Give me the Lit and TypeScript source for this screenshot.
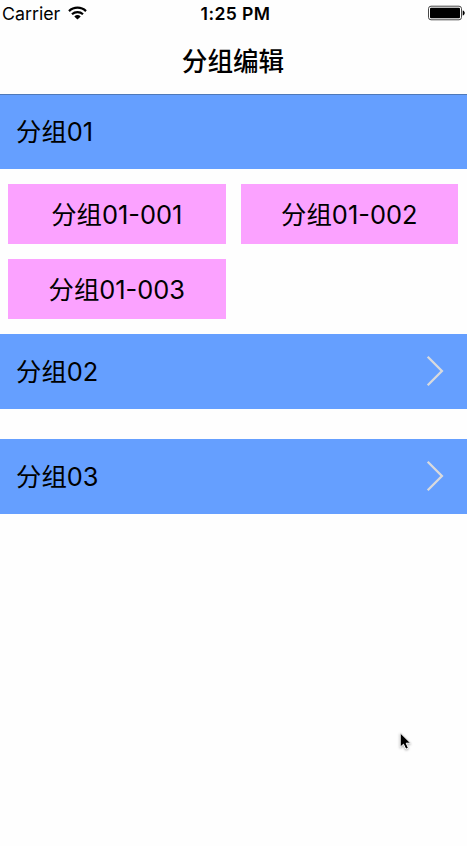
import { LitElement, html, css, svg, nothing } from "lit";
import { customElement, property } from "lit/decorators.js";

interface Group {
  title: string;
  items: string[];
}

const groups: Group[] = [
  { title: "分组01", items: ["分组01-001", "分组01-002", "分组01-003"] },
  { title: "分组02", items: [] },
  { title: "分组03", items: [] },
];

@customElement("status-bar")
export class StatusBar extends LitElement {
  static styles = css`
    :host {
      display: grid;
      grid-template-columns: 1fr auto 1fr;
      align-items: center;
      height: 27px;
      padding: 0 2px;
      box-sizing: border-box;
      font-size: 17.8px;
      line-height: 27px;
    }
    .carrier {
      display: flex;
      align-items: center;
      gap: 8px;
    }
    .time {
      font-weight: 600;
      font-size: 17.6px;
      letter-spacing: 0.4px;
      padding-left: 4px;
    }
    .battery {
      justify-self: end;
      margin-top: -1px;
    }
    svg {
      display: block;
    }
    .wifi {
      margin-top: -1px;
    }
  `;

  render() {
    return html`
      <div class="carrier">
        <span>Carrier</span>
        <svg class="wifi" width="19" height="14" viewBox="0 0 19 14">
          <g fill="none" stroke="#000" stroke-width="2.2">
            <path d="M1 5.1a12.2 12.2 0 0 1 17 0" />
            <path d="M4 8.3a8 8 0 0 1 11 0" />
          </g>
          <path d="M9.5 13.6 6.3 10.4a4.7 4.7 0 0 1 6.4 0z" />
        </svg>
      </div>
      <span class="time">1:25 PM</span>
      <svg class="battery" width="37" height="16" viewBox="0 0 37 16">
        <rect x="0.5" y="1.2" width="33" height="13.6" rx="2.5" fill="#fff" stroke="#333" stroke-width="0.9" />
        <rect x="2" y="2.7" width="30" height="10.6" rx="1" />
        <path d="M34.7 5.4c2.7.6 2.7 4.6 0 5.2z" />
      </svg>
    `;
  }
}

@customElement("group-section")
export class GroupSection extends LitElement {
  @property({ attribute: false }) group!: Group;

  static styles = css`
    :host {
      display: block;
    }
    .header {
      display: flex;
      align-items: center;
      justify-content: space-between;
      height: 75px;
      padding: 0 23px 0 16px;
      box-sizing: border-box;
      background: #659fff;
    }
    .items {
      display: grid;
      grid-template-columns: 1fr 1fr;
      grid-auto-rows: 60px;
      gap: 15px;
      padding: 15px 9px 15px 8px;
    }
    .item {
      display: flex;
      align-items: center;
      justify-content: center;
      padding-top: 1px;
      box-sizing: border-box;
      background: #fba2ff;
    }
    .chevron {
      display: block;
      margin-top: -1px;
    }
  `;

  render() {
    const { title, items } = this.group;
    const open = items.length > 0;
    return html`
      <div class="header">
        <span>${title}</span>
        ${open
          ? nothing
          : html`<svg class="chevron" width="18" height="32" viewBox="0 0 18 32">
              <path d="M1.7 1.8 15.9 16 1.7 30.2" fill="none" stroke="#d9dadd" stroke-width="2.3" />
            </svg>`}
      </div>
      ${open
        ? html`<div class="items">
            ${items.map((item) => html`<div class="item"><span>${item}</span></div>`)}
          </div>`
        : nothing}
    `;
  }
}

@customElement("app-root")
export class AppRoot extends LitElement {
  static styles = css`
    :host {
      display: block;
      position: relative;
      height: 846px;
      overflow: hidden;
      background: #fefefe;
      color: #000;
      font-family: Inter, "Noto Sans CJK SC", sans-serif;
      font-size: 25.4px;
      line-height: 36px;
    }
    .nav {
      position: relative;
      z-index: 1;
      display: flex;
      align-items: center;
      justify-content: center;
      height: 68px;
      padding: 2px 1px 0 0;
      box-sizing: border-box;
      border-bottom: 1px solid #4f79b8;
      font-weight: 500;
      font-size: 25.6px;
    }
    .groups {
      display: flex;
      flex-direction: column;
      margin-top: -1px;
    }
    .groups group-section:last-child {
      margin-top: 30px;
    }
    .pointer {
      position: absolute;
      left: 398px;
      top: 731px;
      filter: drop-shadow(0 1px 1px rgba(0, 0, 0, 0.3));
    }
  `;

  render() {
    return html`
      <status-bar></status-bar>
      <div class="nav"><span>分组编辑</span></div>
      <div class="groups">
        ${groups.map((group) => html`<group-section .group=${group}></group-section>`)}
      </div>
      <svg class="pointer" width="14" height="20" viewBox="0 0 14 20">
        ${svg`<path d="M2.2 1.8v14.4l3.3-3 2.3 5 2.6-1.2-2.2-4.8h4.5z" stroke="#fff" stroke-width="1" />`}
      </svg>
    `;
  }
}
